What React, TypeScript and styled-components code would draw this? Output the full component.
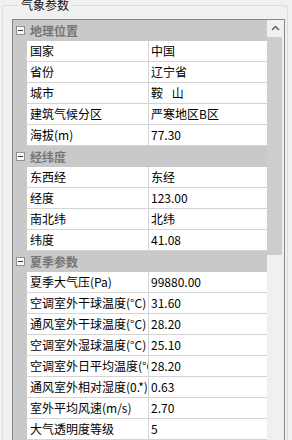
import { createGlobalStyle, styled } from "styled-components";

const GlobalStyle = createGlobalStyle`
    html, body {
        margin: 0;
        padding: 0;
        background: #f0f0f0;
        overflow: hidden;
    }
    body {
        font-family: "Noto Sans CJK SC", "Noto Sans", sans-serif;
        font-size: 12px;
        color: #000;
    }
`;

const GroupBox = styled.fieldset`
    margin: -1px 4px 0 2px;
    padding: 8px 2px 0 9px;
    border: 1px solid #dcdcdc;
    border-radius: 2px;
    min-width: 0;
`;

const Legend = styled.legend`
    padding: 0 2px;
    margin-left: 7px;
    font-size: 12px;
    line-height: 12px;
    color: #111;
`;

const Grid = styled.div`
    display: flex;
    height: 440px;
    border: 1px solid #828790;
    background: #f0f0f0;
    overflow: hidden;
`;

const Table = styled.div`
    width: 254px;
    display: flex;
    flex-direction: column;
`;

const CategoryRow = styled.div`
    display: flex;
    align-items: center;
    height: 21px;
    flex-shrink: 0;
    background: #c9c9c9;
`;

const Toggle = styled.span`
    width: 14px;
    display: flex;
    justify-content: center;
    align-items: center;
`;

const MinusBox = styled.span`
    position: relative;
    width: 7px;
    height: 7px;
    border: 1px solid #919191;
    background: #f7f7f7;
    &::after {
        content: "";
        position: absolute;
        left: 1px;
        top: 3px;
        width: 5px;
        height: 1px;
        background: #333;
    }
`;

const CategoryTitle = styled.span`
    padding-left: 3px;
    font-weight: bold;
    color: #767676;
    line-height: 21px;
`;

const PropRow = styled.div`
    display: grid;
    grid-template-columns: 14px 122px 1fr;
    height: 21px;
    flex-shrink: 0;
`;

const Margin = styled.div`
    background: #c9c9c9;
`;

const Cell = styled.div<{ $name?: boolean }>`
    background: #fff;
    border-bottom: 1px solid #d4d4d4;
    border-right: ${(p) => (p.$name ? "1px solid #d4d4d4" : "none")};
    padding-left: ${(p) => (p.$name ? "3px" : "2px")};
    line-height: 20px;
    white-space: pre;
    overflow: hidden;
`;

const ScrollBar = styled.div`
    width: 16px;
    display: flex;
    flex-direction: column;
    background: #f0f0f0;
`;

const ArrowButton = styled.div`
    height: 16px;
    display: flex;
    align-items: center;
    justify-content: center;
`;

const Thumb = styled.div`
    margin: 1px 1px 0 0;
    height: 218px;
    background: #cdcdcd;
`;

type Prop = [string, string];
type Category = { title: string; rows: Prop[] };

const data: Category[] = [
    {
        title: "地理位置",
        rows: [
            ["国家", "中国"],
            ["省份", "辽宁省"],
            ["城市", "鞍\u2002 山"],
            ["建筑气候分区", "严寒地区B区"],
            ["海拔(m)", "77.30"],
        ],
    },
    {
        title: "经纬度",
        rows: [
            ["东西经", "东经"],
            ["经度", "123.00"],
            ["南北纬", "北纬"],
            ["纬度", "41.08"],
        ],
    },
    {
        title: "夏季参数",
        rows: [
            ["夏季大气压(Pa)", "99880.00"],
            ["空调室外干球温度(°C)", "31.60"],
            ["通风室外干球温度(°C)", "28.20"],
            ["空调室外湿球温度(°C)", "25.10"],
            ["空调室外日平均温度(°C)", "28.20"],
            ["通风室外相对湿度(0.*)", "0.63"],
            ["室外平均风速(m/s)", "2.70"],
            ["大气透明度等级", "5"],
        ],
    },
];

export default function App() {
    return (
        <>
            <GlobalStyle />
            <GroupBox>
                <Legend>气象参数</Legend>
                <Grid>
                    <Table>
                        {data.map((cat) => (
                            <div key={cat.title}>
                                <CategoryRow>
                                    <Toggle>
                                        <MinusBox />
                                    </Toggle>
                                    <CategoryTitle>{cat.title}</CategoryTitle>
                                </CategoryRow>
                                {cat.rows.map(([name, value]) => (
                                    <PropRow key={name}>
                                        <Margin />
                                        <Cell $name>{name}</Cell>
                                        <Cell>{value}</Cell>
                                    </PropRow>
                                ))}
                            </div>
                        ))}
                    </Table>
                    <ScrollBar>
                        <ArrowButton>
                            <svg width="9" height="6" viewBox="0 0 9 6">
                                <path d="M1 5 L4.5 1.5 L8 5" fill="none" stroke="#606060" strokeWidth="1.5" />
                            </svg>
                        </ArrowButton>
                        <Thumb />
                    </ScrollBar>
                </Grid>
            </GroupBox>
        </>
    );
}
